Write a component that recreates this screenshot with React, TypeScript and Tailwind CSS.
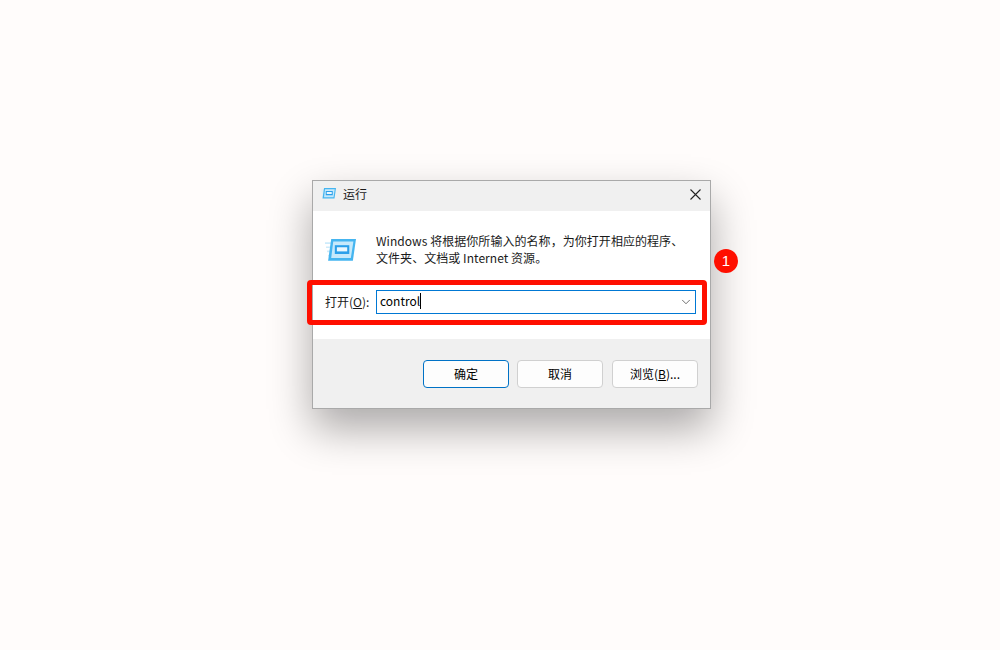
import { ChevronDown } from 'lucide-react';

function RunIcon({ size }: { size: number }) {
  return (
    <svg width={size} height={size * 0.7} viewBox="0 0 30 21">
      <path d="M0 4h6M1 8h5M2 12h4M3 16h3" stroke="#cdebfb" strokeWidth="1.5" />
      <path d="M6 0h24l-3 21H3z" fill="#45b5f0" />
      <path d="M8 2.5h19.5L25 18.5H6z" fill="#c6e9fb" />
      <rect x="9.5" y="6" width="14" height="8.5" fill="#2a9fea" />
      <rect x="11.5" y="8" width="10" height="4" fill="#eaf7fe" />
    </svg>
  );
}

function DialogButton({ primary, children }: { primary?: boolean; children: React.ReactNode }) {
  return (
    <button
      className={
        primary
          ? 'h-[28px] w-[86px] rounded-[4px] border border-[#0072c6] bg-[#fdfdfd] text-[12px] text-black'
          : 'h-[28px] w-[86px] rounded-[4px] border border-[#d0d0d0] bg-[#fdfdfd] text-[12px] text-black'
      }
    >
      {children}
    </button>
  );
}

export default function App() {
  return (
    <div className="relative h-[650px] w-[1000px] overflow-hidden bg-[#fffcfb] pl-[312px] pt-[180px] font-['Noto_Sans_CJK_SC','Noto_Sans',sans-serif]">
      <div className="flex h-[229px] w-[399px] flex-col border border-[#a9a9a9] bg-white shadow-[0_20px_40px_rgba(0,0,0,0.33)]">
        <div className="flex h-[30px] items-center justify-between bg-[#f0f0f0] pb-[5px] pl-[8px] pr-[9px]">
          <div className="flex items-center gap-[7px]">
            <RunIcon size={15} />
            <span className="text-[12px] leading-none text-[#1a1a1a]">运行</span>
          </div>
          <svg width="11" height="11" viewBox="0 0 11 11" className="mt-[2px]">
            <path d="M0.5 0.5l10 10M10.5 0.5l-10 10" stroke="#222" strokeWidth="1.1" />
          </svg>
        </div>
        <div className="flex h-[128px] flex-col bg-white">
          <div className="flex pl-[12px] pt-[28px]">
            <RunIcon size={31} />
            <p className="ml-[20px] mt-[-7px] h-[34px] text-[12px] leading-[17px] tracking-[0.05px] text-[#1a1a1a]">
              Windows 将根据你所输入的名称，为你打开相应的程序、
              <br />
              文件夹、文档或 Internet 资源。
            </p>
          </div>
          <div className="mt-[24px] flex items-center pl-[12px]">
            <span className="-mt-[1px] w-[51px] text-[12px] leading-none text-[#1a1a1a]">
              打开(<span className="underline">O</span>):
            </span>
            <div className="flex h-[24px] w-[320px] items-center justify-between border border-[#0078d4] pb-[3px] pl-[3px] pr-[2px]">
              <div className="flex items-center">
                <span className="text-[12px] leading-none text-black">control</span>
                <span className="h-[16px] w-px bg-black" />
              </div>
              <ChevronDown size={14} strokeWidth={1.2} color="#333" className="mt-[3px]" />
            </div>
          </div>
        </div>
        <div className="flex flex-1 items-start justify-end gap-[8px] bg-[#f0f0f0] pr-[12px] pt-[21px]">
          <DialogButton primary>确定</DialogButton>
          <div className="flex gap-[9px]">
            <DialogButton>取消</DialogButton>
            <DialogButton>
              浏览(<span className="underline">B</span>)...
            </DialogButton>
          </div>
        </div>
      </div>
      <div className="absolute left-[307px] top-[280px] h-[45px] w-[400px] rounded-[4px] border-[5px] border-[#ff0f00]" />
      <div className="absolute left-[714px] top-[249px] flex h-[24px] w-[24px] items-center justify-center rounded-full bg-[#ff0f00] font-['Liberation_Sans',sans-serif] text-[15px] text-white">
        1
      </div>
    </div>
  );
}
